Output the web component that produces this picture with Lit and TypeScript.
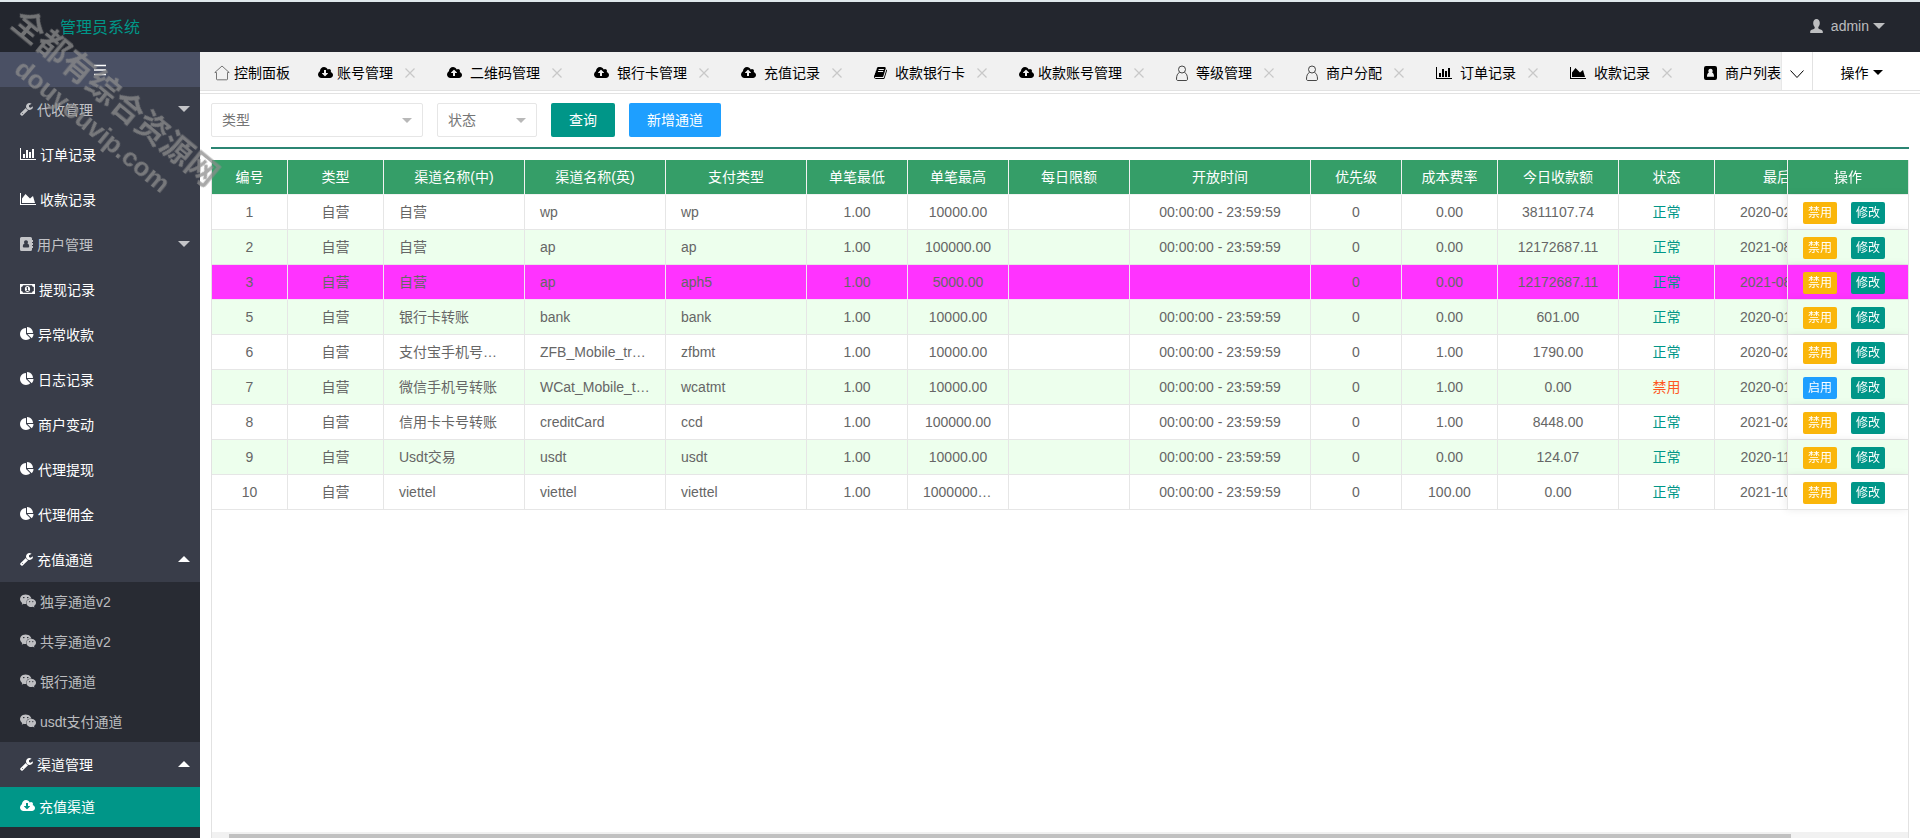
import { LitElement, html, css, svg } from "lit";
import { customElement } from "lit/decorators.js";
import { classMap } from "lit/directives/class-map.js";

const CLOUD =
  "m640 224q0 159-112.5 271.5t-271.5 112.5h-1088q-185 0-316.5-131.5t-131.5-316.5q0-130 70-240t188-165q-2-30-2-43 0-212 150-362t362-150q156 0 285.5 87t188.5 231q71-62 166-62 106 0 181 75t75 181q0 76-41 138 130 31 213.5 135.5t83.5 238.5z";

interface Glyph {
  w: number;
  box: string;
  art: unknown;
}

const GLYPHS: Record<string, Glyph> = {
  wrench: {
    w: 13,
    box: "64 0 1664 1792",
    art: svg`<path d="M448 1472q0-26-19-45t-45-19-45 19-19 45 19 45 45 19 45-19 19-45zm644-420l-682 682q-37 37-90 37-52 0-91-37l-106-108q-38-36-38-90 0-53 38-91l681-681q39 98 114.5 173.5t173.5 114.5zm634-435q0 39-23 106-47 134-164.5 217.5t-258.5 83.5q-185 0-316.5-131.5t-131.5-316.5 131.5-316.5 316.5-131.5q58 0 121.5 16.5t107.5 46.5q16 11 16 28t-16 28l-293 169v224l193 107q5-3 79-48.5t135.5-81 70.5-35.5q15 0 23.5 10t8.5 25z"/>`,
  },
  bars: {
    w: 16,
    box: "0 0 2048 1792",
    art: svg`<path d="M640 896v512h-256v-512h256zm384-512v1024h-256v-1024h256zm1024 1152v128h-2048v-1536h128v1408h1920zm-640-896v768h-256v-768h256zm384-384v1152h-256v-1152h256z"/>`,
  },
  area: {
    w: 16,
    box: "0 0 2048 1792",
    art: svg`<path d="M2048 1536v128h-2048v-1536h128v1408h1920zm-384-1024l256 896h-1664v-576l448-576 576 576z"/>`,
  },
  pie: {
    w: 14,
    box: "0 0 1792 1792",
    art: svg`<path d="M768 890l546 546q-106 108-247.5 168t-298.5 60q-209 0-385.5-103t-279.5-279.5-103-385.5 103-385.5 279.5-279.5 385.5-103v762zm187 6h773q0 157-60 298.5t-168 247.5zm709-128h-768v-768q209 0 385.5 103t279.5 279.5 103 385.5z"/>`,
  },
  contacts: {
    w: 13,
    box: "0 0 13 14",
    art: svg`<path fill-rule="evenodd" d="M1.500 0h9A1.500 1.500 0 0 1 12 1.500V3h1v2h-1v1h1v2h-1v1h1v2h-1v1.500a1.500 1.500 0 0 1-1.500 1.500h-9A1.500 1.500 0 0 1 0 12.500v-11A1.500 1.500 0 0 1 1.500 0zM6 3.200a2 2 0 0 0-1.500 3.300C3.400 6.900 2.800 7.900 2.800 9.600c0 .5.3.8.7.8h5c.4 0 .7-.3.7-.8 0-1.700-.6-2.700-1.700-3.100A2 2 0 0 0 6 3.200z"/>`,
  },
  badge: {
    w: 13,
    box: "0 0 13 14",
    art: svg`<path fill-rule="evenodd" d="M2 0h9a2 2 0 0 1 2 2v10a2 2 0 0 1-2 2H2a2 2 0 0 1-2-2V2a2 2 0 0 1 2-2zM6.500 2.700a2.200 2.200 0 0 0-1.600 3.700C3.600 7 3 8.200 3 10.800h7c0-2.600-.6-3.800-1.900-4.400a2.200 2.200 0 0 0-1.600-3.700z"/>`,
  },
  money: {
    w: 15,
    box: "0 0 15 14",
    art: svg`<path fill-rule="evenodd" d="M0 2h15v10H0zM3 3.200A1.900 1.900 0 0 1 1.200 5v4A1.900 1.900 0 0 1 3 10.800h9A1.900 1.900 0 0 1 13.800 9V5A1.900 1.900 0 0 1 12 3.200zM7.500 4c1.600 0 2.600 1.300 2.600 3s-1 3-2.600 3-2.600-1.300-2.600-3 1-3 2.600-3zM6.400 5.700v.8h.7V8.200h-.8V9h2.500v-.8h-.8V5h-.7z"/>`,
  },
  chat: {
    w: 16,
    box: "0 0 2048 1792",
    art: svg`<path d="M580 461q0-41-25-66t-66-25q-43 0-76 25.5t-33 65.5q0 39 33 64.500t76 25.500q41 0 66-24.500t25-65.500zm743 507q0-28-25.500-50t-65.500-22q-27 0-49.500 22.500t-22.500 49.500q0 28 22.500 50.500t49.500 22.500q40 0 65.500-22t25.500-51zm-236-507q0-41-24.500-66t-65.500-25q-43 0-76 25.500t-33 65.500q0 39 33 64.500t76 25.500q41 0 65.500-24.500t24.500-65.500zm635 507q0-28-26-50t-65-22q-27 0-49.500 22.500t-22.500 49.500q0 28 22.500 50.500t49.500 22.500q39 0 65-22t26-51zm-266-397q-31-4-70-4-169 0-311 77t-223.500 208.500-81.500 287.500q0 78 23 152-35 3-68 3-26 0-50-1.500t-55-6.500-44.500-7-54.500-10.500-50-10.500l-253 127 72-218q-290-203-290-490 0-169 97.500-311t264-223.500 363.500-81.500q176 0 332.500 66t262 182.500 136.500 260.500zm592 561q0 117-68.500 223.500t-185.500 193.500l55 181-199-109q-150 37-218 37-169 0-311-70.500t-223.500-191.500-81.500-264 81.500-264 223.500-191.500 311-70.500q161 0 303 70.500t227.500 192 85.500 263.500z"/>`,
  },
  download: {
    w: 15,
    box: "0 0 1920 1792",
    art: svg`<path d=${"M1280 928q0-14-9-23t-23-9h-224v-352q0-13-9.5-22.5t-22.5-9.5h-192q-13 0-22.5 9.5t-9.5 22.5v352h-224q-13 0-22.5 9.5t-9.5 22.5q0 14 9 23l352 352q9 9 23 9t23-9l351-351q10-12 10-24z" + CLOUD}/>`,
  },
  upload: {
    w: 15,
    box: "0 0 1920 1792",
    art: svg`<path d=${"M1280 864q0-14-9-23l-352-352q-9-9-23-9t-23 9l-351 351q-10 12-10 24 0 14 9 23t23 9h224v352q0 13 9.5 22.5t22.5 9.5h192q13 0 22.500-9.500t9.500-22.500v-352h224q13 0 22.500-9.500t9.500-22.500z" + CLOUD.replace("m640 224", "m640 288")}/>`,
  },
  book: {
    w: 13,
    box: "64 0 1664 1792",
    art: svg`<path d="M1703 478q40 57 18 129l-275 906q-19 64-76.5 107.5t-122.5 43.5h-923q-77 0-148.5-53.5t-99.5-131.5q-24-67-2-127 0-4 3-27t4-37q1-8-3-21.5t-3-19.5q2-11 8-21t16.5-23.5 16.5-23.5q23-38 45-91.5t30-91.5q3-10 .5-30t-.5-28q3-11 17-28t17-23q21-36 42-92t25-90q1-9-2.5-32t.5-28q4-13 22-30.5t22-22.5q19-26 42.5-84.5t27.5-96.5q1-8-3-25.5t-2-26.5q2-8 9-18t18-23 17-21q8-12 16.5-30.5t15-35 16-36 19.5-32 26.5-23.5 36-11.5 47.5 5.5l-1 3q38-9 51-9h761q74 0 114 56t18 130l-274 906q-36 119-71.5 153.5t-128.5 34.5h-869q-27 0-38 15-11 16-1 43 24 70 144 70h923q29 0 56-15.5t35-41.5l300-987q7-22 5-57 38 15 59 43zm-1064 2q-4 13 2 22.5t20 9.5h608q13 0 25.5-9.5t16.5-22.5l21-64q4-13-2-22.5t-20-9.5h-608q-13 0-25.5 9.5t-16.5 22.5zm-83 256q-4 13 2 22.5t20 9.5h608q13 0 25.5-9.5t16.5-22.5l21-64q4-13-2-22.5t-20-9.5h-608q-13 0-25.5 9.5t-16.5 22.5z"/>`,
  },
  person: {
    w: 12,
    box: "0 0 12 16",
    art: svg`<g fill="none" stroke="#333" stroke-width=".9"><circle cx="6" cy="4.500" r="3.500"/><path d="M3.500 7.300C1.500 8.600.5 10.500.5 14c0 1 .5 1.500 1.500 1.500h8c1 0 1.500-.5 1.500-1.500 0-3.500-1-5.400-3-6.700"/></g>`,
  },
  home: {
    w: 16,
    box: "0 0 16 16",
    art: svg`<path fill="none" stroke="#666" stroke-width=".9" d="M2.500 7.500H.8L8 1l7.200 6.500h-1.700V14a.8.8 0 0 1-.8.800H3.300a.8.8 0 0 1-.8-.8z"/>`,
  },
  bust: {
    w: 13,
    box: "0 0 13 14",
    art: svg`<path d="M6.500 0C8.600 0 9.800 1.700 9.800 4c0 1.600-.6 3-1.500 3.900v1.400c.3 1 4.300 1.100 4.500 3.300V14H.2v-1.400C.4 10.400 4.400 10.300 4.700 9.300V7.900C3.800 7 3.200 5.600 3.200 4c0-2.300 1.200-4 3.300-4z"/>`,
  },
  menu: {
    w: 12,
    box: "0 0 12 12",
    art: svg`<path fill="none" stroke="currentColor" stroke-width="1.500" d="M0 1.500h12M0 6h12M0 10.500h12"/>`,
  },
  cross: {
    w: 10,
    box: "0 0 10 10",
    art: svg`<path fill="none" stroke="currentColor" stroke-width="1.200" d="M.5.5l9 9m0-9l-9 9"/>`,
  },
  chevron: {
    w: 14,
    box: "0 0 14 14",
    art: svg`<path fill="none" stroke="currentColor" d="M.5 3.500 7 10.500l6.500-7"/>`,
  },
  down: { w: 12, box: "0 0 12 6", art: svg`<path d="M0 0h12L6 6z"/>` },
  up: { w: 12, box: "0 0 12 6", art: svg`<path d="M0 6h12L6 0z"/>` },
};

const icon = (name: string) => {
  const g = GLYPHS[name];
  const [, , bw, bh] = g.box.split(" ").map(Number);
  return html`<svg class="icon" width=${g.w} height=${Math.round((g.w * bh) / bw)} viewBox=${g.box} aria-hidden="true">${g.art}</svg>`;
};

const NAV = [
  { icon: "wrench", text: "代收管理", arrow: "down", dim: true },
  { icon: "bars", text: "订单记录" },
  { icon: "area", text: "收款记录" },
  { icon: "contacts", text: "用户管理", arrow: "down", dim: true },
  { icon: "money", text: "提现记录" },
  { icon: "pie", text: "异常收款" },
  { icon: "pie", text: "日志记录" },
  { icon: "pie", text: "商户变动" },
  { icon: "pie", text: "代理提现" },
  { icon: "pie", text: "代理佣金" },
  {
    icon: "wrench",
    text: "充值通道",
    arrow: "up",
    children: [
      { icon: "chat", text: "独享通道v2" },
      { icon: "chat", text: "共享通道v2" },
      { icon: "chat", text: "银行通道" },
      { icon: "chat", text: "usdt支付通道" },
    ],
  },
  {
    icon: "wrench",
    text: "渠道管理",
    arrow: "up",
    children: [{ icon: "download", text: "充值渠道", active: true }],
  },
] as Array<{
  icon: string;
  text: string;
  arrow?: string;
  dim?: boolean;
  children?: Array<{ icon: string; text: string; active?: boolean }>;
}>;

const TABS = [
  { icon: "home", text: "控制面板", tight: true, fixed: true },
  { icon: "download", text: "账号管理", tight: true },
  { icon: "upload", text: "二维码管理" },
  { icon: "upload", text: "银行卡管理" },
  { icon: "upload", text: "充值记录" },
  { icon: "book", text: "收款银行卡" },
  { icon: "upload", text: "收款账号管理", tight: true },
  { icon: "person", text: "等级管理" },
  { icon: "person", text: "商户分配" },
  { icon: "bars", text: "订单记录" },
  { icon: "area", text: "收款记录" },
  { icon: "badge", text: "商户列表" },
] as Array<{ icon: string; text: string; tight?: boolean; fixed?: boolean }>;

const COLUMNS: Array<[string, number]> = [
  ["编号", 76],
  ["类型", 96],
  ["渠道名称(中)", 141],
  ["渠道名称(英)", 141],
  ["支付类型", 141],
  ["单笔最低", 101],
  ["单笔最高", 101],
  ["每日限额", 121],
  ["开放时间", 181],
  ["优先级", 91],
  ["成本费率", 96],
  ["今日收款额", 121],
  ["状态", 96],
  ["最后更新时间", 181],
  ["操作", 121],
];

const DAY = "00:00:00 - 23:59:59";
const ROWS: string[][] = [
  ["1", "自营", "自营", "wp", "wp", "1.00", "10000.00", "", DAY, "0", "0.00", "3811107.74", "正常", "2020-02-20 12:00:00"],
  ["2", "自营", "自营", "ap", "ap", "1.00", "100000.00", "", DAY, "0", "0.00", "12172687.11", "正常", "2021-08-20 12:00:00"],
  ["3", "自营", "自营", "ap", "aph5", "1.00", "5000.00", "", "", "0", "0.00", "12172687.11", "正常", "2021-08-20 12:00:00"],
  ["5", "自营", "银行卡转账", "bank", "bank", "1.00", "10000.00", "", DAY, "0", "0.00", "601.00", "正常", "2020-01-20 12:00:00"],
  ["6", "自营", "支付宝手机号转账", "ZFB_Mobile_transfer", "zfbmt", "1.00", "10000.00", "", DAY, "0", "1.00", "1790.00", "正常", "2020-02-20 12:00:00"],
  ["7", "自营", "微信手机号转账", "WCat_Mobile_transfer", "wcatmt", "1.00", "10000.00", "", DAY, "0", "1.00", "0.00", "禁用", "2020-01-20 12:00:00"],
  ["8", "自营", "信用卡卡号转账", "creditCard", "ccd", "1.00", "100000.00", "", DAY, "0", "1.00", "8448.00", "正常", "2021-02-20 12:00:00"],
  ["9", "自营", "Usdt交易", "usdt", "usdt", "1.00", "10000.00", "", DAY, "0", "0.00", "124.07", "正常", "2020-11-20 12:00:00"],
  ["10", "自营", "viettel", "viettel", "viettel", "1.00", "100000000.00", "", DAY, "0", "100.00", "0.00", "正常", "2021-10-20 12:00:00"],
];

const FONT = css`
  font-family: "Liberation Sans", "Noto Sans CJK SC", sans-serif;
  font-size: 14px;
`;

@customElement("side-nav")
export class SideNav extends LitElement {
  static styles = css`
    :host { display: block; background: #393d49; color: #fff; overflow: hidden; }
    a, button { box-sizing: border-box; display: flex; align-items: center; gap: 4px; padding: 0 20px 2px; color: inherit; text-decoration: none; }
    button { width: 100%; height: 35px; padding-bottom: 0; justify-content: center; border: 0; background: #4a5064; }
    .item { height: 45px; }
    .dim { color: rgba(255, 255, 255, 0.7); }
    .arrow { display: flex; margin-left: auto; margin-right: -10px; }
    .children { background: #282b33; color: rgba(255, 255, 255, 0.7); }
    .last { padding-bottom: 20px; }
    .child { height: 40px; }
    .active { background: #009688; color: #fff; }
    .icon { flex: none; fill: currentColor; }
  `;

  render() {
    return html`
      <button aria-label="收起菜单">${icon("menu")}</button>
      <nav>
        ${NAV.map(
          (n, i) => html`
            <a href="#" class=${classMap({ item: true, dim: !!n.dim })}>
              ${icon(n.icon)}<span>${n.text}</span>
              ${n.arrow ? html`<span class="arrow">${icon(n.arrow)}</span>` : ""}
            </a>
            ${n.children
              ? html`<div class=${classMap({ children: true, last: i === NAV.length - 1 })}>
                  ${n.children.map(
                    (c) => html`<a href="#" class=${classMap({ child: true, active: !!c.active })}>${icon(c.icon)}<span>${c.text}</span></a>`
                  )}
                </div>`
              : ""}
          `
        )}
      </nav>
    `;
  }
}

@customElement("tab-strip")
export class TabStrip extends LitElement {
  static styles = css`
    :host { display: flex; height: 39px; box-sizing: border-box; background: #fff; border-bottom: 1px solid #e2e2e2; color: #000; }
    button { border: 0; padding: 0; background: none; color: inherit; font: inherit; }
    .tabs { display: flex; flex: 1; min-width: 0; overflow: hidden; background: #f1f1f1; }
    .tab { display: flex; flex: none; align-items: center; padding: 3px 14px 0; }
    .label { display: flex; align-items: center; gap: 8px; color: inherit; text-decoration: none; line-height: 34px; white-space: nowrap; }
    .tight { gap: 4px; }
    .close { display: flex; justify-content: center; width: 18px; margin-left: 8px; color: #c8c8c8; }
    .more { flex: none; display: flex; align-items: center; justify-content: center; width: 31px; padding-top: 5px; border-left: 1px solid #e8e8e8; }
    .ops { flex: none; display: flex; align-items: center; justify-content: center; gap: 4px; width: 108px; padding: 2px 10px 0 0; border-left: 1px solid #e2e2e2; }
    .ops .icon { width: 10px; height: 5px; }
    .icon { flex: none; fill: currentColor; }
  `;

  render() {
    return html`
      <div class="tabs">
        ${TABS.map(
          (t) => html`<div class="tab">
            <a href="#" class=${classMap({ label: true, tight: !!t.tight })}>${icon(t.icon)}<span>${t.text}</span></a>
            ${t.fixed ? "" : html`<button class="close" aria-label="关闭">${icon("cross")}</button>`}
          </div>`
        )}
      </div>
      <button class="more" aria-label="更多">${icon("chevron")}</button>
      <button class="ops">操作${icon("down")}</button>
    `;
  }
}

@customElement("channel-table")
export class ChannelTable extends LitElement {
  static styles = css`
    :host { display: flex; flex-direction: column; min-height: 0; border: 1px solid #e2e2e2; border-width: 0 1px; }
    .scroll { flex: 1; min-height: 0; overflow: auto; scrollbar-width: none; }
    table { table-layout: fixed; width: 1805px; min-width: 100%; border-collapse: separate; border-spacing: 0; color: #666; }
    th, td { box-sizing: border-box; height: 35px; padding: 0 15px; border: solid #e6e6e6; border-width: 0 1px 1px 0; text-align: center; font-weight: 400; white-space: nowrap; overflow: hidden; text-overflow: ellipsis; line-height: 28px; }
    th { background: #359e68; color: #fff; border-color: #f2f2f2; }
    td { background: #fff; }
    .even td { background: #edffed; }
    .marked td { background: #ff33ff; border-color: #f0e6f0; }
    td.left { text-align: left; }
    td.on { color: #009688; }
    td.off { color: #ff5722; }
    .pin { position: sticky; right: 0; border-left-width: 1px; border-right-width: 0; box-shadow: -1px 0 8px rgba(0, 0, 0, 0.08); overflow: visible; }
    .actions { display: flex; gap: 14px; padding-top: 2px; }
    .actions button { width: 34px; height: 22px; padding: 0; border: 0; border-radius: 2px; background: #009688; color: #fff; font: inherit; font-size: 12px; line-height: 22px; }
    .actions .warn { background: #fab60a; }
    .actions .info { background: #1e9fff; }
    .bar { flex: none; display: flex; height: 6px; padding: 2px 17px 0; box-sizing: border-box; background: #f1f1f1; }
    .thumb { width: 94%; background: #c1c1c1; }
  `;

  private cell(value: string, index: number) {
    const cls = {
      left: index >= 2 && index <= 4,
      on: index === 12 && value === "正常",
      off: index === 12 && value === "禁用",
    };
    return html`<td class=${classMap(cls)}>${value}</td>`;
  }

  render() {
    return html`
      <div class="scroll">
        <table>
          <colgroup>
            ${COLUMNS.map(([, w]) => html`<col width=${w} />`)}
          </colgroup>
          <thead>
            <tr>
              ${COLUMNS.map(([t], i) => html`<th scope="col" class=${classMap({ pin: i === COLUMNS.length - 1 })}>${t}</th>`)}
            </tr>
          </thead>
          <tbody>
            ${ROWS.map(
              (r, i) => html`<tr class=${classMap({ even: i % 2 === 1, marked: i === 2 })}>
                ${r.map((v, c) => this.cell(v, c))}
                <td class="pin">
                  <div class="actions">
                    ${r[12] === "正常" ? html`<button class="warn">禁用</button>` : html`<button class="info">启用</button>`}
                    <button>修改</button>
                  </div>
                </td>
              </tr>`
            )}
          </tbody>
        </table>
      </div>
      <div class="bar"><div class="thumb"></div></div>
    `;
  }
}

@customElement("app-root")
export class AppRoot extends LitElement {
  static styles = css`
    :host { display: flex; flex-direction: column; position: relative; height: 100vh; box-sizing: border-box; border-top: 2px solid #dfe8ec; overflow: hidden; background: #fff; ${FONT} }
    header { box-sizing: border-box; flex: none; display: flex; align-items: center; justify-content: space-between; height: 50px; padding: 0 35px 2px 60px; background: #23262e; }
    .brand { margin: 0; font-size: 16px; font-weight: 400; color: #009688; }
    .user { display: flex; align-items: center; gap: 4px; color: rgba(255, 255, 255, 0.7); text-decoration: none; }
    .user span { padding-left: 4px; }
    .body { flex: 1; min-height: 0; display: flex; }
    side-nav { flex: none; width: 200px; }
    main { flex: 1; min-width: 0; display: flex; flex-direction: column; }
    .page { flex: 1; min-height: 0; display: flex; flex-direction: column; margin-top: 2px; padding: 9px 11px 0; border-top: 1px solid #e2e2e2; }
    form { display: flex; gap: 14px; padding-bottom: 10px; border-bottom: 2px solid #2b8573; margin-bottom: 11px; }
    .field { display: grid; align-items: center; }
    .field > * { grid-area: 1 / 1; }
    .field .icon { justify-self: end; margin-right: 11px; width: 10px; height: 5px; fill: #b8b8b8; pointer-events: none; }
    select { appearance: none; width: 100%; height: 34px; padding: 0 10px; border: 1px solid #e6e6e6; border-radius: 2px; background: #fff; color: #757575; font: inherit; }
    .kind { width: 212px; }
    .state { width: 100px; }
    form button { height: 34px; padding: 0 18px 2px; border: 0; border-radius: 2px; background: #009688; color: #fff; font: inherit; }
    form .add { background: #1e9fff; }
    channel-table { flex: 1; }
    .icon { flex: none; fill: currentColor; }
    .mark { position: absolute; left: -36px; top: 74px; width: 280px; text-align: center; font-weight: 700; line-height: 36px; color: rgba(140, 140, 140, 0.75); transform: rotate(39.5deg); pointer-events: none; white-space: nowrap; }
    .mark .big { font-size: 32px; }
    .mark .small { font-size: 26px; }
  `;

  render() {
    return html`
      <header>
        <h1 class="brand">管理员系统</h1>
        <a class="user" href="#">${icon("bust")}<span>admin</span>${icon("down")}</a>
      </header>
      <div class="body">
        <side-nav></side-nav>
        <main>
          <tab-strip></tab-strip>
          <section class="page">
            <form @submit=${(e: Event) => e.preventDefault()}>
              <div class="field kind">
                <select aria-label="类型"><option>类型</option><option>自营</option></select>
                ${icon("down")}
              </div>
              <div class="field state">
                <select aria-label="状态"><option>状态</option><option>正常</option><option>禁用</option></select>
                ${icon("down")}
              </div>
              <button type="submit">查询</button>
              <button type="button" class="add">新增通道</button>
            </form>
            <channel-table></channel-table>
          </section>
        </main>
      </div>
      <div class="mark">
        <div class="big">全都有综合资源网</div>
        <div class="small">douyouvip.com</div>
      </div>
    `;
  }
}
